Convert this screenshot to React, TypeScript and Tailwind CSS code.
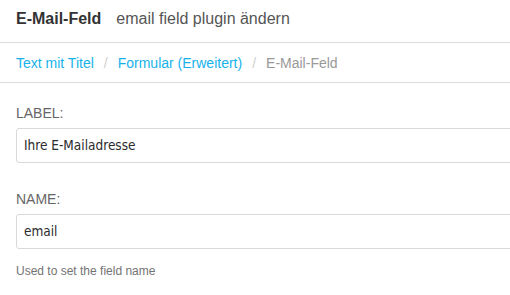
export default function App() {
  const sans = { fontFamily: '"Liberation Sans", Arial, sans-serif' };
  const field = { fontFamily: '"DejaVu Sans Condensed", "DejaVu Sans", Verdana, sans-serif' };
  return (
    <div className="w-[510px] h-[295px] overflow-hidden bg-white text-[#333]" style={sans}>
      {/* Header */}
      <div className="h-[43px] border-b border-[#dcdcdc] px-4 pt-[9px]">
        <h1 className="text-[16px] leading-5 whitespace-nowrap">
          <span className="font-bold text-[#333]">E-Mail-Feld</span>
          <span className="ml-[15px] text-[#555]">email field plugin ändern</span>
        </h1>
      </div>

      {/* Breadcrumb */}
      <div className="h-[40px] border-b border-[#dcdcdc] px-4 pt-[10px]">
        <ol className="flex text-[14px] leading-5 whitespace-nowrap">
          <li className="text-[#17b2ea]">Text mit Titel</li>
          <li className="mx-[10px] text-[#d0d0d0]">/</li>
          <li className="text-[#17b2ea]">Formular (Erweitert)</li>
          <li className="mx-[10px] text-[#d0d0d0]">/</li>
          <li className="text-[#999]">E-Mail-Feld</li>
        </ol>
      </div>

      {/* Form */}
      <div className="pl-4 pt-[20px] w-[560px]">
        <div>
          <label className="block text-[14px] leading-5 text-[#666] uppercase">Label:</label>
          <div className="mt-[5px] h-[35px] border border-[#d9d9d9] rounded-[3px] px-[7px] flex items-center text-[13.5px] text-[#2b2b2b]" style={field}>
            Ihre E-Mailadresse
          </div>
        </div>

        <div className="mt-[26px]">
          <label className="block text-[14px] leading-5 text-[#666] uppercase">Name:</label>
          <div className="mt-[5px] h-[35px] border border-[#d9d9d9] rounded-[3px] px-[7px] flex items-center text-[13.5px] text-[#2b2b2b]" style={field}>
            email
          </div>
          <p className="mt-[14px] text-[12px] leading-4 text-[#737373]">Used to set the field name</p>
        </div>
      </div>
    </div>
  );
}
